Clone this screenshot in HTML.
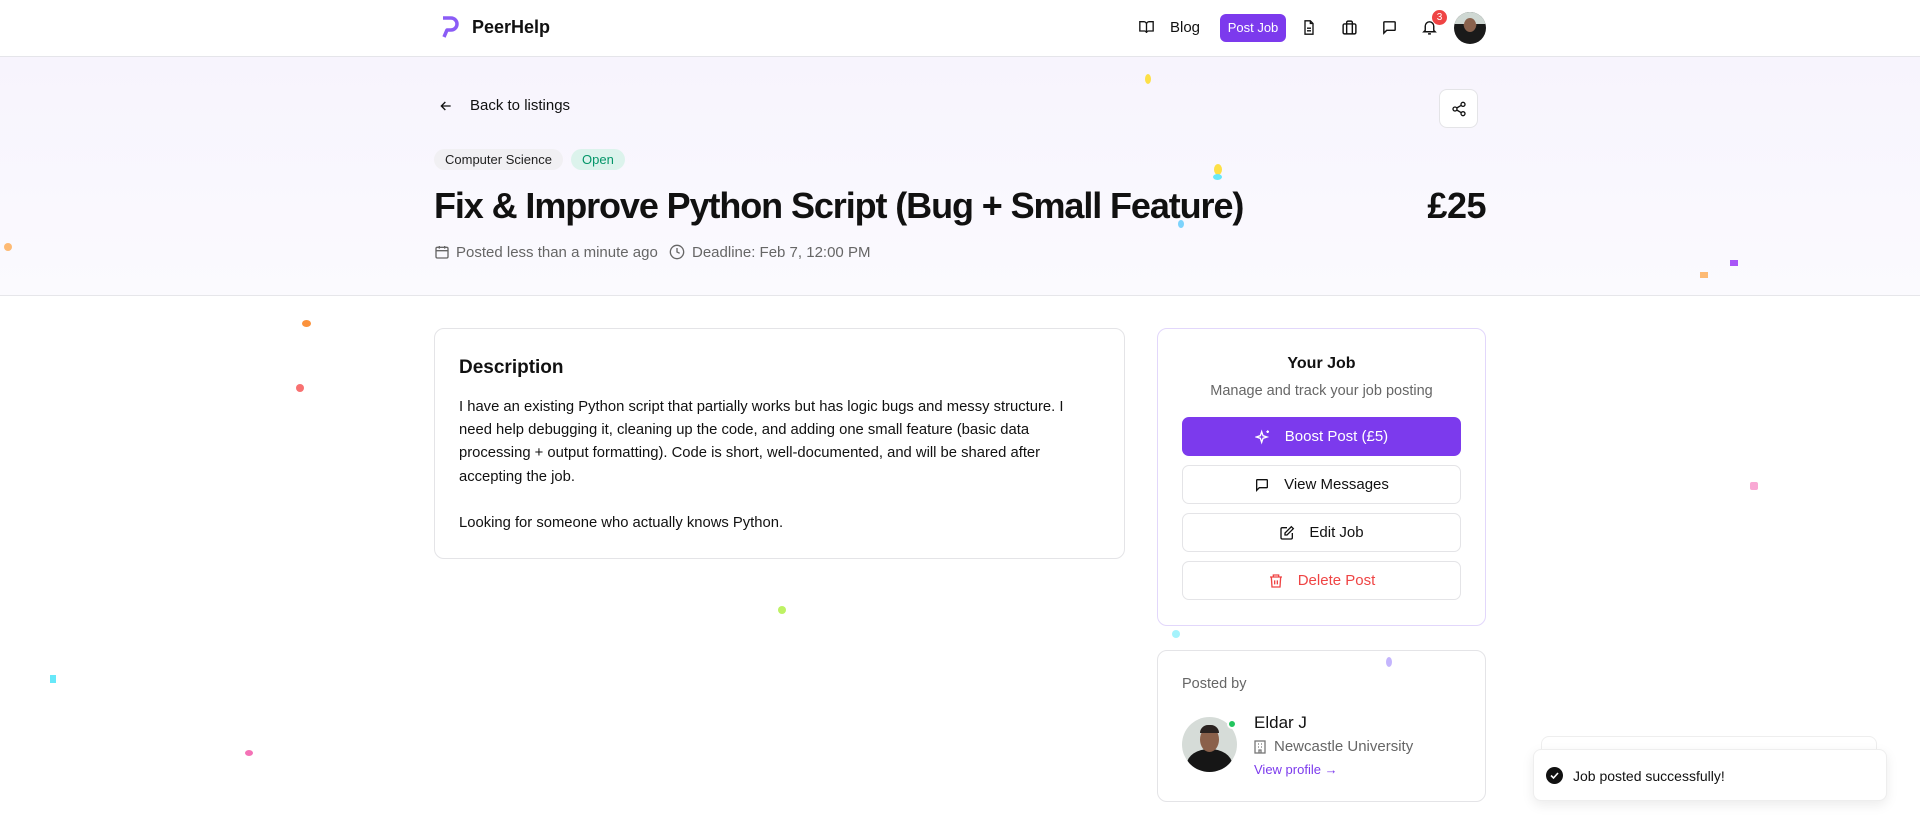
<!DOCTYPE html>
<html><head><meta charset="utf-8"><style>
*{box-sizing:border-box;margin:0;padding:0}
body{width:1920px;height:834px;overflow:hidden;background:#fff;font-family:"Liberation Sans",sans-serif;color:#111;position:relative}
.hdr{position:absolute;left:0;top:0;width:1920px;height:57px;border-bottom:1px solid #e5e5ea;background:#fff}
.hero{position:absolute;left:0;top:57px;width:1920px;height:239px;background:linear-gradient(#f7f4fd,#fbfafe);border-bottom:1px solid #e6e6ea}
.abs{position:absolute}
.tag{position:absolute;top:149px;height:21px;border-radius:11px;font-size:13px;line-height:21px;padding:0 11px}
.card{position:absolute;border:1px solid #e4e4e7;border-radius:10px;background:#fff}
.btn{position:absolute;left:24px;width:279px;height:39px;border:1px solid #e4e4e7;border-radius:7px;display:flex;align-items:center;justify-content:center;gap:14px;font-size:15px}
svg{display:block}
</style></head><body>
<div class="hdr">
 <svg class="abs" style="left:440px;top:15px" width="20" height="24" viewBox="0 0 20 24"><path d="M3 3h8a6 6 0 0 1 0 12H7l-3 7" fill="none" stroke="#8b5cf6" stroke-width="3.5" stroke-linejoin="round"/></svg>
 <div class="abs" style="left:472px;top:17px;font-size:18px;font-weight:bold">PeerHelp</div>
 <svg class="abs" style="left:1138px;top:19px" width="17" height="16" viewBox="0 0 24 24" fill="none" stroke="#111" stroke-width="2"><path d="M2 4h6a4 4 0 0 1 4 4v13a3 3 0 0 0-3-3H2zM22 4h-6a4 4 0 0 0-4 4v13a3 3 0 0 1 3-3h7z"/></svg>
 <div class="abs" style="left:1170px;top:19px;font-size:15px">Blog</div>
 <div class="abs" style="left:1220px;top:14px;width:66px;height:28px;background:#7c3aed;border-radius:6px;color:#fff;font-size:13px;line-height:28px;text-align:center">Post Job</div>
 <svg class="abs" style="left:1301px;top:19px" width="16" height="17" viewBox="0 0 24 24" fill="none" stroke="#111" stroke-width="2"><path d="M14 2H6v20h12V6zM14 2v4h4M9 13h6M9 17h6"/></svg>
 <svg class="abs" style="left:1341px;top:19px" width="17" height="17" viewBox="0 0 24 24" fill="none" stroke="#111" stroke-width="2"><rect x="3" y="7" width="18" height="14" rx="2"/><path d="M8 21V5a2 2 0 0 1 2-2h4a2 2 0 0 1 2 2v16"/></svg>
 <svg class="abs" style="left:1381px;top:19px" width="17" height="17" viewBox="0 0 24 24" fill="none" stroke="#111" stroke-width="2"><path d="M4 20V5a1 1 0 0 1 1-1h14a1 1 0 0 1 1 1v10a1 1 0 0 1-1 1H8z"/></svg>
 <svg class="abs" style="left:1421px;top:19px" width="17" height="17" viewBox="0 0 24 24" fill="none" stroke="#111" stroke-width="2"><path d="M6 16V10a6 6 0 0 1 12 0v6l2 2H4zM10 21h4"/></svg>
 <div class="abs" style="left:1432px;top:10px;width:15px;height:15px;border-radius:50%;background:#ef4444;color:#fff;font-size:10px;line-height:15px;text-align:center">3</div>
 <div class="abs" style="left:1454px;top:12px;width:32px;height:32px;border-radius:50%;background:radial-gradient(circle at 50% 40%,#6b4a3a 0 25%,#1a1a1a 26% 100%);overflow:hidden"><div style="position:absolute;left:0;top:0;width:32px;height:12px;background:#cfd8d3"></div><div style="position:absolute;left:10px;top:6px;width:12px;height:14px;border-radius:50%;background:#8a624d"></div></div>
</div>
<div class="hero"></div>
<svg class="abs" style="left:438px;top:98px" width="16" height="16" viewBox="0 0 24 24" fill="none" stroke="#111" stroke-width="2"><path d="M19 12H5M11 6l-6 6 6 6"/></svg>
<div class="abs" style="left:470px;top:97px;font-size:15px">Back to listings</div>
<div class="abs" style="left:1439px;top:89px;width:39px;height:39px;border:1px solid #e4e4e7;border-radius:8px;background:#fff"><svg style="margin:11px" width="16" height="16" viewBox="0 0 24 24" fill="none" stroke="#111" stroke-width="2"><circle cx="18" cy="5" r="3"/><circle cx="6" cy="12" r="3"/><circle cx="18" cy="19" r="3"/><path d="M8.6 13.5l6.8 4M15.4 6.5l-6.8 4"/></svg></div>
<div class="tag" style="left:434px;background:#f1f0f3;color:#222">Computer Science</div>
<div class="tag" style="left:571px;background:#dcf3ec;color:#059669">Open</div>
<div class="abs" style="left:434px;top:185px;font-size:36px;font-weight:bold;letter-spacing:-1.1px">Fix &amp; Improve Python Script (Bug + Small Feature)</div>
<div class="abs" style="left:1400px;top:185px;width:86px;text-align:right;font-size:36px;font-weight:bold;letter-spacing:-0.5px">£25</div>
<svg class="abs" style="left:434px;top:244px" width="16" height="16" viewBox="0 0 24 24" fill="none" stroke="#666" stroke-width="2"><rect x="3" y="5" width="18" height="16" rx="2"/><path d="M3 10h18M8 3v4M16 3v4"/></svg>
<div class="abs" style="left:456px;top:244px;font-size:15px;color:#666">Posted less than a minute ago</div>
<svg class="abs" style="left:669px;top:244px" width="16" height="16" viewBox="0 0 24 24" fill="none" stroke="#666" stroke-width="2"><circle cx="12" cy="12" r="10"/><path d="M12 6v6l4 2"/></svg>
<div class="abs" style="left:692px;top:244px;font-size:15px;color:#666">Deadline: Feb 7, 12:00 PM</div>

<div class="card" style="left:434px;top:328px;width:691px;height:231px">
 <div class="abs" style="left:24px;top:28px;font-size:19px;font-weight:bold">Description</div>
 <div class="abs" style="left:24px;top:67px;width:630px;font-size:14.8px;line-height:23.2px">I have an existing Python script that partially works but has logic bugs and messy structure. I need help debugging it, cleaning up the code, and adding one small feature (basic data processing + output formatting). Code is short, well-documented, and will be shared after accepting the job.<br><br>Looking for someone who actually knows Python.</div>
</div>

<div class="card" style="left:1157px;top:328px;width:329px;height:298px;border-color:#e2d7fb">
 <div class="abs" style="left:0;top:26px;width:327px;text-align:center;font-size:16px;font-weight:bold">Your Job</div>
 <div class="abs" style="left:0;top:54px;width:327px;text-align:center;font-size:14.5px;color:#666">Manage and track your job posting</div>
 <div class="btn" style="top:88px;background:#7c3aed;border-color:#7c3aed;color:#fff"><svg width="16" height="16" viewBox="0 0 24 24" fill="none" stroke="#fff" stroke-width="2"><path d="M10 4l2 6 6 2-6 2-2 6-2-6-6-2 6-2zM19 2v4M17 4h4"/></svg>Boost Post (£5)</div>
 <div class="btn" style="top:136px"><svg width="16" height="16" viewBox="0 0 24 24" fill="none" stroke="#111" stroke-width="2"><path d="M4 20V5a1 1 0 0 1 1-1h14a1 1 0 0 1 1 1v10a1 1 0 0 1-1 1H8z"/></svg>View Messages</div>
 <div class="btn" style="top:184px"><svg width="16" height="16" viewBox="0 0 24 24" fill="none" stroke="#111" stroke-width="2"><path d="M12 4H5a2 2 0 0 0-2 2v13a2 2 0 0 0 2 2h13a2 2 0 0 0 2-2v-7M18.5 2.5l3 3L12 15H9v-3z"/></svg>Edit Job</div>
 <div class="btn" style="top:232px;color:#ef4444"><svg width="16" height="16" viewBox="0 0 24 24" fill="none" stroke="#ef4444" stroke-width="2"><path d="M3 6h18M8 6V3h8v3M5 6l1 15h12l1-15M10 11v6M14 11v6"/></svg>Delete Post</div>
</div>

<div class="card" style="left:1157px;top:650px;width:329px;height:152px">
 <div class="abs" style="left:24px;top:25px;font-size:14.5px;color:#666">Posted by</div>
 <div class="abs" style="left:24px;top:66px;width:55px;height:55px;border-radius:50%;overflow:hidden;background:#d6dcd8"><div style="position:absolute;left:5px;top:32px;width:45px;height:30px;border-radius:50% 50% 0 0;background:#161616"></div><div style="position:absolute;left:18px;top:10px;width:19px;height:25px;border-radius:50%;background:#8a604a"></div><div style="position:absolute;left:18px;top:8px;width:19px;height:8px;border-radius:8px 8px 0 0;background:#2a2220"></div></div>
 <div class="abs" style="left:69px;top:68px;width:10px;height:10px;border-radius:50%;background:#22c55e;border:2px solid #fff"></div>
 <div class="abs" style="left:96px;top:62px;font-size:17px">Eldar J</div>
 <svg class="abs" style="left:96px;top:89px" width="12" height="14" viewBox="0 0 12 14" fill="none" stroke="#777" stroke-width="1.3"><rect x="1" y="1" width="10" height="12"/><path d="M4 4h1M7 4h1M4 7h1M7 7h1M5 13v-3h2v3"/></svg>
 <div class="abs" style="left:116px;top:87px;font-size:15px;color:#666">Newcastle University</div>
 <div class="abs" style="left:96px;top:111px;font-size:13px;color:#7c3aed">View profile →</div>
</div>

<div class="abs" style="left:1541px;top:736px;width:336px;height:50px;background:#fff;border:1px solid #eee;border-radius:8px"></div>
<div class="abs" style="left:1533px;top:749px;width:354px;height:52px;background:#fff;border:1px solid #eee;border-radius:8px;box-shadow:0 4px 12px rgba(0,0,0,.08)">
 <div class="abs" style="left:12px;top:17px;width:17px;height:17px;border-radius:50%;background:#111"><svg width="17" height="17" viewBox="0 0 17 17"><path d="M5 8.5l2.5 2.5 4.5-5" fill="none" stroke="#fff" stroke-width="1.6"/></svg></div>
 <div class="abs" style="left:39px;top:18px;font-size:14px">Job posted successfully!</div>
</div>

<div class="abs" style="left:1145px;top:74px;width:6px;height:10px;border-radius:50%;background:#fde047"></div>
<div class="abs" style="left:1214px;top:164px;width:8px;height:11px;border-radius:50%;background:#fde047"></div>
<div class="abs" style="left:1213px;top:174px;width:9px;height:6px;border-radius:50%;background:#67e8f9"></div>
<div class="abs" style="left:1178px;top:220px;width:6px;height:8px;border-radius:50%;background:#7dd3fc"></div>
<div class="abs" style="left:302px;top:320px;width:9px;height:7px;border-radius:50%;background:#fb923c"></div>
<div class="abs" style="left:296px;top:384px;width:8px;height:8px;border-radius:50%;background:#f87171"></div>
<div class="abs" style="left:4px;top:243px;width:8px;height:8px;border-radius:50%;background:#fdba74"></div>
<div class="abs" style="left:778px;top:606px;width:8px;height:8px;border-radius:50%;background:#bef264"></div>
<div class="abs" style="left:1172px;top:630px;width:8px;height:8px;border-radius:50%;background:#a5f3fc"></div>
<div class="abs" style="left:1386px;top:657px;width:6px;height:10px;border-radius:50%;background:#c4b5fd"></div>
<div class="abs" style="left:1750px;top:482px;width:8px;height:8px;border-radius:2px;background:#f9a8d4"></div>
<div class="abs" style="left:1700px;top:272px;width:8px;height:6px;background:#fdba74"></div>
<div class="abs" style="left:1730px;top:260px;width:8px;height:6px;background:#a855f7"></div>
<div class="abs" style="left:245px;top:750px;width:8px;height:6px;border-radius:50%;background:#f472b6"></div>
<div class="abs" style="left:50px;top:675px;width:6px;height:8px;background:#67e8f9"></div>
</body></html>
